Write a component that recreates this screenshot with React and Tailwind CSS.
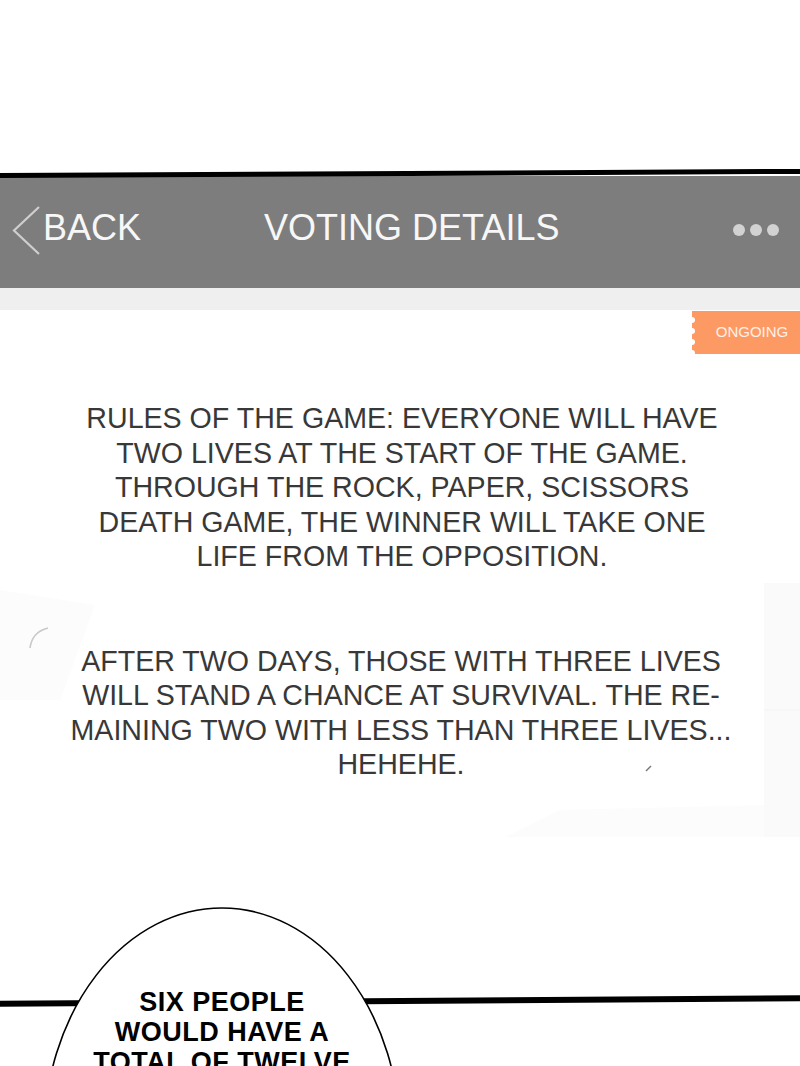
import React from "react";

export default function App() {
  return (
    <div className="relative w-[800px] h-[1066px] overflow-hidden bg-white font-['Liberation_Sans',Arial,sans-serif]">
      {/* faint background art */}
      <svg className="absolute left-0 top-0" width="800" height="1066" aria-hidden="true">
        <rect x="764" y="583" width="36" height="254" fill="#fafafa" />
        <line x1="764" y1="710" x2="800" y2="710" stroke="#f3f3f3" strokeWidth="1" />
        <polygon points="505,837 764,837 764,805 560,810" fill="#fcfcfc" />
        <polygon points="0,590 95,605 60,700 0,700" fill="#fcfcfc" />
        <path d="M30 648 Q32 632 48 628" stroke="#c9c9c9" strokeWidth="1.6" fill="none" />
        <path d="M646 771 L651 766" stroke="#777" strokeWidth="1.5" />
      </svg>

      <div className="relative flex flex-col">
        <div className="h-[171px]" />
        <div className="h-[5px] bg-black -rotate-[0.3deg]" />

        {/* header */}
        <div className="h-[112px] bg-[#7d7d7d] flex items-start pt-[34px] text-[#f7f7f7]">
          <svg className="ml-[11px] -mt-[4px]" width="32" height="50" viewBox="0 0 32 50">
            <path d="M28 1 L3 24.5 L28 48" stroke="#cfcfcf" strokeWidth="2.2" fill="none" />
          </svg>
          <span className="text-[36px] leading-none">BACK</span>
          <span className="ml-[123px] text-[36px] leading-none">VOTING DETAILS</span>
          <div className="ml-auto mr-[21px] mt-[14px] flex gap-[5px]">
            <span className="w-[12px] h-[12px] rounded-full bg-[#d2d2d2]" />
            <span className="w-[12px] h-[12px] rounded-full bg-[#d2d2d2]" />
            <span className="w-[12px] h-[12px] rounded-full bg-[#d2d2d2]" />
          </div>
        </div>
        <div className="h-[22px] bg-[#efefef]" />

        {/* content */}
        <div className="flex justify-end mt-[1px]">
          <div className="relative w-[108px] h-[43px] bg-[#fd9a63] flex items-center justify-center pl-[12px]">
            <span className="absolute -left-[3px] top-[6px] w-[6px] h-[6px] rounded-full bg-white" />
            <span className="absolute -left-[3px] top-[17px] w-[6px] h-[6px] rounded-full bg-white" />
            <span className="absolute -left-[3px] top-[28px] w-[6px] h-[6px] rounded-full bg-white" />
            <span className="absolute -left-[3px] top-[39px] w-[6px] h-[6px] rounded-full bg-white" />
            <span className="text-[15px] text-[#fff0e6]">ONGOING</span>
          </div>
        </div>

        <p className="mt-[47px] pl-[4px] text-center text-[28.6px] leading-[34.5px] text-[#383838]">
          RULES OF THE GAME: EVERYONE WILL HAVE
          <br />
          TWO LIVES AT THE START OF THE GAME.
          <br />
          THROUGH THE ROCK, PAPER, SCISSORS
          <br />
          DEATH GAME, THE WINNER WILL TAKE ONE
          <br />
          LIFE FROM THE OPPOSITION.
        </p>

        <p className="mt-[70px] pl-[2px] text-center text-[28.6px] leading-[34.5px] text-[#383838]">
          AFTER TWO DAYS, THOSE WITH THREE LIVES
          <br />
          WILL STAND A CHANCE AT SURVIVAL. THE RE-
          <br />
          MAINING TWO WITH LESS THAN THREE LIVES...
          <br />
          HEHEHE.
        </p>

        <div className="mt-[216px] h-[6px] bg-black -rotate-[0.4deg]" />
      </div>

      {/* speech bubble */}
      <svg className="absolute left-0 top-[900px]" width="450" height="166" aria-hidden="true">
        <ellipse cx="222" cy="238" rx="178" ry="230" fill="white" stroke="black" strokeWidth="1.6" />
      </svg>
      <div className="absolute left-[22px] top-[987px] w-[400px] text-center text-[27px] leading-[30px] tracking-[0.5px] font-bold text-black">
        SIX PEOPLE
        <br />
        WOULD HAVE A
        <br />
        TOTAL OF TWELVE
      </div>
    </div>
  );
}
